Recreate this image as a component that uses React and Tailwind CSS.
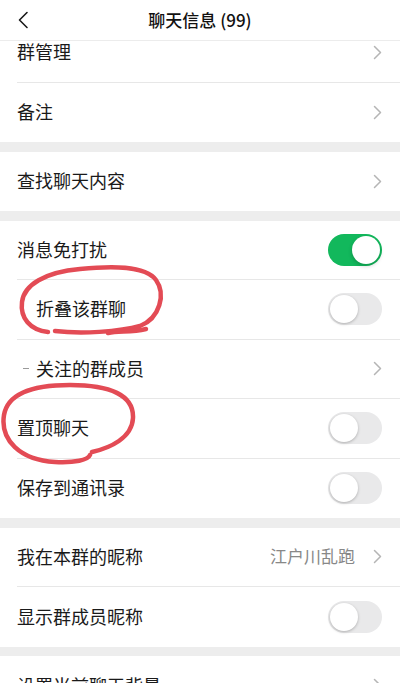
import React from 'react'

const sections = [
  [
    { label: '群管理', arrow: true },
    { label: '备注', arrow: true },
  ],
  [{ label: '查找聊天内容', arrow: true }],
  [
    { label: '消息免打扰', toggle: true, on: true },
    { label: '折叠该群聊', toggle: true, indent: true },
    { label: '关注的群成员', arrow: true, indent: true, dash: true },
    { label: '置顶聊天', toggle: true },
    { label: '保存到通讯录', toggle: true },
  ],
  [
    { label: '我在本群的昵称', arrow: true, value: '江户川乱跑' },
    { label: '显示群成员昵称', toggle: true },
  ],
  [{ label: '设置当前聊天背景', arrow: true }],
]

function Chevron() {
  return (
    <svg width="9" height="15" viewBox="0 0 9 15" className="shrink-0">
      <polyline
        points="1.5,1.5 7.5,7.5 1.5,13.5"
        fill="none"
        stroke="#b5b5b5"
        strokeWidth="1.5"
        strokeLinecap="round"
        strokeLinejoin="round"
      />
    </svg>
  )
}

function Switch({ on }) {
  if (on) {
    return (
      <div className="w-[54px] h-[32px] rounded-full bg-[#12b85c] p-[2px] flex justify-end shrink-0">
        <div className="w-[28px] h-[28px] rounded-full bg-white shadow-[0_2px_4px_rgba(0,0,0,0.2)]" />
      </div>
    )
  }
  return (
    <div className="w-[54px] h-[32px] rounded-full bg-[#e9e9ea] p-[2px] flex shrink-0">
      <div className="w-[28px] h-[28px] rounded-full bg-white shadow-[0_1px_3px_rgba(0,0,0,0.25)]" />
    </div>
  )
}

function Row({ item, last }) {
  return (
    <div className="h-[59.5px] bg-white pl-[17px]">
      <div
        className={`h-full flex items-center pr-[18px] ${last ? '' : 'border-b border-[#e7e7e7]'}`}
      >
        <div className={`flex-1 flex items-center ${item.indent ? 'pl-[19px]' : ''}`}>
          {item.dash && <span className="w-[6px] h-px bg-[#9a9a9a] -ml-[13px] mr-[7px]" />}
          <span className="text-[18px] text-[#1a1a1a] leading-none -mt-[2px]">{item.label}</span>
        </div>
        {item.value && (
          <span className="text-[17px] text-[#888] leading-none mr-[18px] -mt-[2px]">{item.value}</span>
        )}
        {item.arrow && <Chevron />}
        {item.toggle && <Switch on={item.on} />}
      </div>
    </div>
  )
}

export default function App() {
  return (
    <div className="relative w-[400px] h-[683px] overflow-hidden bg-[#ededed] flex flex-col font-['Noto_Sans_CJK_SC','PingFang_SC',sans-serif]">
      <header className="h-[41px] shrink-0 bg-white border-b border-[#ececec] flex items-center relative z-10">
        <svg width="12" height="18" viewBox="0 0 12 18" className="ml-[17px]">
          <polyline
            points="10,1.5 2.5,9 10,16.5"
            fill="none"
            stroke="#1a1a1a"
            strokeWidth="1.6"
            strokeLinecap="round"
            strokeLinejoin="round"
          />
        </svg>
        <h1 className="flex-1 text-center text-[17px] font-medium text-[#111] -ml-[29px]">
          聊天信息 (99)
        </h1>
      </header>

      <main className="flex-1 overflow-hidden">
        <div className="-mt-[18px] flex flex-col gap-[9.5px]">
          {sections.map((rows, i) => (
            <div key={i}>
              {rows.map((item, j) => (
                <Row key={item.label} item={item} last={j === rows.length - 1} />
              ))}
            </div>
          ))}
        </div>
      </main>

      {/* red pen marks drawn over the list */}
      <svg
        className="absolute inset-0 pointer-events-none z-20"
        width="400"
        height="683"
        viewBox="0 0 400 683"
      >
        <g fill="none" stroke="#e34b55" strokeWidth="4.5" strokeLinecap="round" strokeLinejoin="round">
          <path d="M48 332 C30 330 20 318 22 302 C24 285 45 272 80 269 C110 266 145 265 156 280 C166 294 160 318 140 326 C120 332 80 334 55 331" />
          <path d="M108 333 C118 330 130 333 146 329" />
          <path d="M92 452 C110 448 132 438 133 418 C134 395 110 385 70 385 C35 385 8 392 4 415 C0 440 20 460 55 462 C75 463 88 460 90 455" />
        </g>
      </svg>
    </div>
  )
}
